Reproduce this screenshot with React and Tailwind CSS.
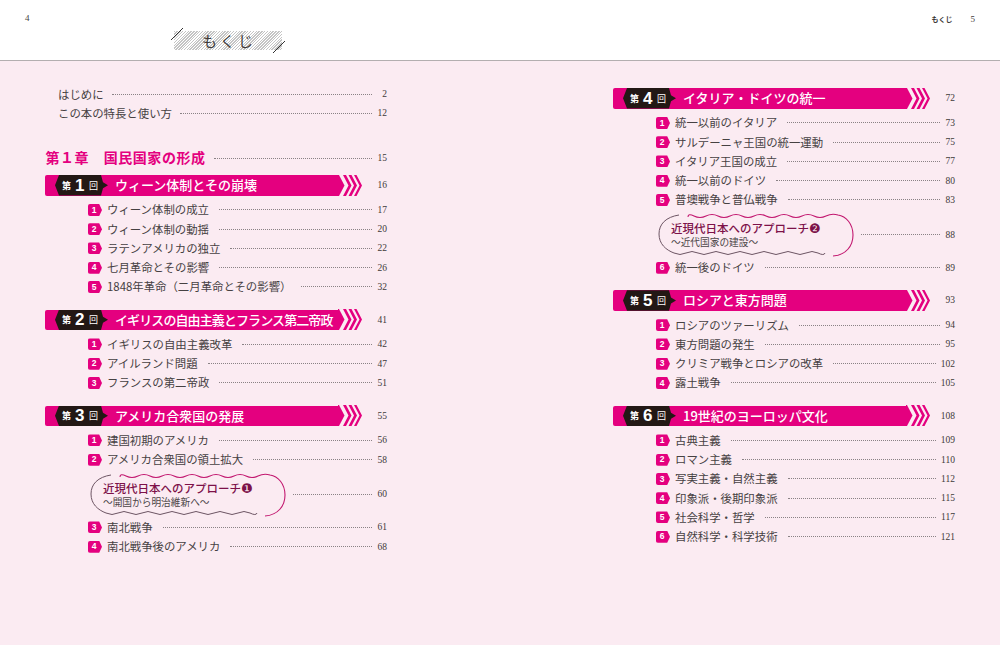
const LEFT = [
  { no: 1, title: 'ウィーン体制とその崩壊', page: 16, tight: 'tracking-normal', items: [
    ['ウィーン体制の成立', 17], ['ウィーン体制の動揺', 20], ['ラテンアメリカの独立', 22], ['七月革命とその影響', 26], ['1848年革命（二月革命とその影響）', 32],
  ] },
  { no: 2, title: 'イギリスの自由主義とフランス第二帝政', page: 41, tight: 'tracking-[-0.9px]', items: [
    ['イギリスの自由主義改革', 42], ['アイルランド問題', 47], ['フランスの第二帝政', 51],
  ] },
  { no: 3, title: 'アメリカ合衆国の発展', page: 55, tight: 'tracking-normal', items: [
    ['建国初期のアメリカ', 56], ['アメリカ合衆国の領土拡大', 58],
    { mark: '❶', sub: '～開国から明治維新へ～', page: 60 },
    ['南北戦争', 61], ['南北戦争後のアメリカ', 68],
  ] },
]

const RIGHT = [
  { no: 4, title: 'イタリア・ドイツの統一', page: 72, tight: 'tracking-normal', items: [
    ['統一以前のイタリア', 73], ['サルデーニャ王国の統一運動', 75], ['イタリア王国の成立', 77], ['統一以前のドイツ', 80], ['普墺戦争と普仏戦争', 83],
    { mark: '❷', sub: '～近代国家の建設～', page: 88 },
    ['統一後のドイツ', 89],
  ] },
  { no: 5, title: 'ロシアと東方問題', page: 93, tight: 'tracking-normal', items: [
    ['ロシアのツァーリズム', 94], ['東方問題の発生', 95], ['クリミア戦争とロシアの改革', 102], ['露土戦争', 105],
  ] },
  { no: 6, title: '19世紀のヨーロッパ文化', page: 108, tight: 'tracking-normal', items: [
    ['古典主義', 109], ['ロマン主義', 110], ['写実主義・自然主義', 112], ['印象派・後期印象派', 115], ['社会科学・哲学', 117], ['自然科学・科学技術', 121],
  ] },
]

function PageNo({ children }) {
  return (
    <span className={`${children >= 100 ? 'w-[18px]' : 'w-[14px]'} shrink-0 text-right font-['Liberation_Serif',serif] text-[9.5px] text-[#3e3a39]`}>
      {children}
    </span>
  )
}

function Leader() {
  return <span className="ml-[5px] mr-[1px] min-w-0 flex-1 border-t border-dotted border-[#8a8285]" />
}

function Plain({ label, page }) {
  return (
    <div className="flex h-[19.25px] items-center pl-[13px]">
      <span className="mr-[3px] text-[11.4px] text-[#464142]">{label}</span>
      <Leader />
      <PageNo>{page}</PageNo>
    </div>
  )
}

function Item({ n, label, page }) {
  return (
    <div className="flex h-[19.25px] items-center pl-[43px]">
      <span className="mr-[5px] flex h-[12px] w-[14px] shrink-0 items-center justify-center rounded-[2px] bg-[#e4007f] pr-[2px] font-['Liberation_Sans',sans-serif] text-[8.5px] font-bold text-white [clip-path:polygon(0_0,80%_0,100%_50%,80%_100%,0_100%)]">
        {n}
      </span>
      <span className="mr-[5px] whitespace-nowrap text-[11.4px] text-[#464142]">{label}</span>
      <Leader />
      <PageNo>{page}</PageNo>
    </div>
  )
}

function WaveBox() {
  return (
    <svg className="absolute inset-0" width="196" height="46" viewBox="0 0 196 46" fill="none">
      <path d="M21 3C8 5 1 12 1 22C1 32 8 38 16 41Q22 44 28 41T40 41T52 41T64 41T76 41T88 41T100 41T112 41T124 41T136 41T148 41T160 41T167 41" stroke="#6d5564" strokeWidth="1" />
      <path d="M175 44C188 43 195 34 195 23C195 12 188 4 180 3Q174 1 168 4T156 4T144 4T132 4T120 4T108 4T96 4T84 4T72 4T60 4T48 4T36 4T30 5" stroke="#c2176f" strokeWidth="1.1" />
    </svg>
  )
}

function Callout({ mark, sub, page }) {
  return (
    <div className="mt-[2px] flex h-[46.5px] items-center pl-[45px]">
      <div className="relative h-[46px] w-[196px] shrink-0 pl-[13px] pt-[9px]">
        <WaveBox />
        <p className="text-[11.5px] font-medium leading-[15px] text-[#7d1149]">
          近現代日本へのアプローチ<span className="font-['DejaVu_Sans',sans-serif] text-[13px] leading-none">{mark}</span>
        </p>
        <p className="text-[9.7px] leading-[13px] text-[#4c4648]">{sub}</p>
      </div>
      <span className="w-[2px]" />
      <Leader />
      <PageNo>{page}</PageNo>
    </div>
  )
}

function Chevrons() {
  return (
    <svg className="shrink-0" width="24" height="21" viewBox="0 0 24 21">
      <path d="M0 0H1L6.5 10.5L1 21H0Z" fill="#e4007f" />
      <path d="M5 0H8L13.5 10.5L8 21H5L10.5 10.5Z" fill="#e4007f" />
      <path d="M10.5 0H13.5L19 10.5L13.5 21H10.5L16 10.5Z" fill="#e4007f" />
      <path d="M16 0H18.5L24 10.5L18.5 21H16L21.5 10.5Z" fill="#e4007f" />
    </svg>
  )
}

function Bar({ no, title, page, tight }) {
  return (
    <div className="flex h-[20.5px] items-center">
      <div className="flex h-full w-[293px] items-center rounded-l-[2px] bg-[#e4007f] pl-[10px]">
        <div className="flex h-full w-[53px] shrink-0 items-center bg-[#231815] pl-[7px] text-white [clip-path:polygon(4px_0,46px_0,48px_35%,53px_50%,48px_65%,46px_100%,4px_100%,0_50%)]">
          <span className="w-[13px] text-[9px] font-bold">第</span>
          <span className="w-[14px] font-['Liberation_Sans',sans-serif] text-[17px] font-bold leading-none">{no}</span>
          <span className="text-[9px]">回</span>
        </div>
        <span className={`ml-[7px] whitespace-nowrap pb-[1px] text-[13px] font-medium text-white ${tight}`}>{title}</span>
      </div>
      <Chevrons />
      <span className="flex-1" />
      <PageNo>{page}</PageNo>
    </div>
  )
}

function Section({ sec, first }) {
  let n = 0
  return (
    <section className={first ? '' : 'mt-[13px]'}>
      <Bar no={sec.no} title={sec.title} page={sec.page} tight={sec.tight} />
      <div className="mt-[4.75px]">
        {sec.items.map((it) => {
          if (!Array.isArray(it)) return <Callout key={it.page} {...it} />
          n += 1
          return <Item key={it[1]} n={n} label={it[0]} page={it[1]} />
        })}
      </div>
    </section>
  )
}

export default function App() {
  return (
    <div className="flex h-[645px] w-[1000px] flex-col overflow-hidden bg-white font-['Noto_Sans_CJK_JP',sans-serif]">
      {/* page header */}
      <header className="flex h-[61px] shrink-0 justify-between border-b border-[#b3aeb0] pl-[25px] pr-[25px]">
        <div className="flex items-start">
          <span className="mt-[12px] w-[7px] font-['Liberation_Serif',serif] text-[9px] text-[#444]">4</span>
          <div className="relative ml-[142px] mt-[31px] flex h-[19px] w-[108px] items-center justify-center bg-[repeating-linear-gradient(135deg,#c4c4c4_0,#c4c4c4_1px,#fff_1px,#fff_2px)]">
            <span className="pl-[2px] text-[15px] leading-none tracking-[3px] text-[#3e3a39]">もくじ</span>
            <svg className="absolute left-[-4px] top-[-4px]" width="14" height="14" viewBox="0 0 14 14">
              <path d="M1 13L13 1" stroke="#333" strokeWidth="1" />
            </svg>
            <svg className="absolute right-[-4px] bottom-[-4px]" width="14" height="14" viewBox="0 0 14 14">
              <path d="M1 13L13 1" stroke="#333" strokeWidth="1" />
            </svg>
          </div>
        </div>
        <div className="mt-[12px] flex items-start">
          <span className="text-[7px] font-bold leading-[14px] text-[#3e3a39]">もくじ</span>
          <span className="ml-[18px] font-['Liberation_Serif',serif] text-[9px] leading-[14px] text-[#3e3a39]">5</span>
        </div>
      </header>

      <main className="flex flex-1 bg-[#fbebf2] pl-[45px]">
        <div className="w-[342px] pt-[23.5px]">
          <Plain label="はじめに" page={2} />
          <Plain label="この本の特長と使い方" page={12} />
          <div className="mb-[7px] mt-[25px] flex h-[20px] items-center pl-[0.5px]">
            <span className="mr-[3px] whitespace-nowrap pb-[1px] text-[14px] font-bold tracking-[0.55px] text-[#e4007f]">第１章　国民国家の形成</span>
            <Leader />
            <PageNo>15</PageNo>
          </div>
          {LEFT.map((sec, i) => (
            <Section key={sec.no} sec={sec} first={i === 0} />
          ))}
        </div>
        <div className="ml-[226px] w-[342px] pt-[27px]">
          {RIGHT.map((sec, i) => (
            <Section key={sec.no} sec={sec} first={i === 0} />
          ))}
        </div>
      </main>
    </div>
  )
}
